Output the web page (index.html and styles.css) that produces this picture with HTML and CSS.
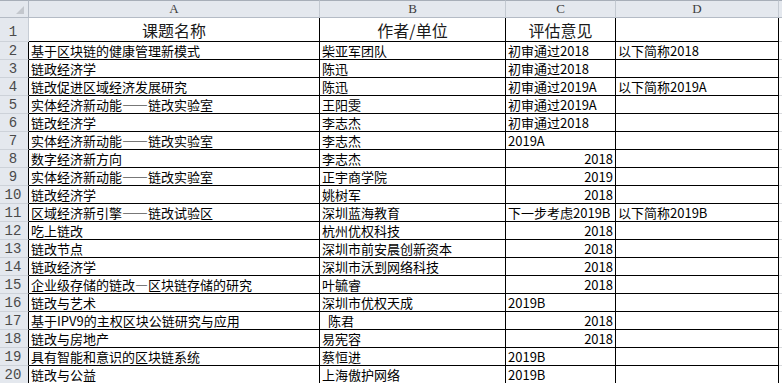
FILE: index.html
```html
<!DOCTYPE html>
<html lang="zh-CN">
<head>
<meta charset="utf-8">
<title>课题评估</title>
<link rel="stylesheet" href="styles.css">
</head>
<body>
<div class="sheet">
  <div class="corner"><span class="tri"></span></div>
  <div class="colh">A</div>
  <div class="colh">B</div>
  <div class="colh">C</div>
  <div class="colh">D</div>
  <div class="colh rest"></div>

  <div class="rn rn1">1</div>
  <div class="c title">课题名称</div>
  <div class="c title">作者/单位</div>
  <div class="c title">评估意见</div>
  <div class="c"></div>
  <div class="g"></div>

  <div class="rn">2</div><div class="c">基于区块链的健康管理新模式</div><div class="c">柴亚军团队</div><div class="c">初审通过2018</div><div class="c">以下简称2018</div><div class="g"></div>
  <div class="rn">3</div><div class="c">链政经济学</div><div class="c">陈迅</div><div class="c">初审通过2018</div><div class="c"></div><div class="g"></div>
  <div class="rn">4</div><div class="c">链改促进区域经济发展研究</div><div class="c">陈迅</div><div class="c">初审通过2019A</div><div class="c">以下简称2019A</div><div class="g"></div>
  <div class="rn">5</div><div class="c">实体经济新动能——链改实验室</div><div class="c">王阳雯</div><div class="c">初审通过2019A</div><div class="c"></div><div class="g"></div>
  <div class="rn">6</div><div class="c">链改经济学</div><div class="c">李志杰</div><div class="c">初审通过2018</div><div class="c"></div><div class="g"></div>
  <div class="rn">7</div><div class="c">实体经济新动能——链改实验室</div><div class="c">李志杰</div><div class="c">2019A</div><div class="c"></div><div class="g"></div>
  <div class="rn">8</div><div class="c">数字经济新方向</div><div class="c">李志杰</div><div class="c num">2018</div><div class="c"></div><div class="g"></div>
  <div class="rn">9</div><div class="c">实体经济新动能——链改实验室</div><div class="c">正宇商学院</div><div class="c num">2019</div><div class="c"></div><div class="g"></div>
  <div class="rn">10</div><div class="c">链改经济学</div><div class="c">姚树军</div><div class="c num">2018</div><div class="c"></div><div class="g"></div>
  <div class="rn">11</div><div class="c">区域经济新引擎——链改试验区</div><div class="c">深圳蓝海教育</div><div class="c">下一步考虑2019B</div><div class="c">以下简称2019B</div><div class="g"></div>
  <div class="rn">12</div><div class="c">吃上链改</div><div class="c">杭州优权科技</div><div class="c num">2018</div><div class="c"></div><div class="g"></div>
  <div class="rn">13</div><div class="c">链改节点</div><div class="c">深圳市前安晨创新资本</div><div class="c num">2018</div><div class="c"></div><div class="g"></div>
  <div class="rn">14</div><div class="c">链政经济学</div><div class="c">深圳市沃到网络科技</div><div class="c num">2018</div><div class="c"></div><div class="g"></div>
  <div class="rn">15</div><div class="c">企业级存储的链改—区块链存储的研究</div><div class="c">叶毓睿</div><div class="c num">2018</div><div class="c"></div><div class="g"></div>
  <div class="rn">16</div><div class="c">链改与艺术</div><div class="c">深圳市优权天成</div><div class="c">2019B</div><div class="c"></div><div class="g"></div>
  <div class="rn">17</div><div class="c">基于IPV9的主权区块公链研究与应用</div><div class="c indent">陈君</div><div class="c num">2018</div><div class="c"></div><div class="g"></div>
  <div class="rn">18</div><div class="c">链改与房地产</div><div class="c">易宪容</div><div class="c num">2018</div><div class="c"></div><div class="g"></div>
  <div class="rn">19</div><div class="c">具有智能和意识的区块链系统</div><div class="c">蔡恒进</div><div class="c">2019B</div><div class="c"></div><div class="g"></div>
  <div class="rn">20</div><div class="c">链改与公益</div><div class="c">上海傲护网络</div><div class="c">2019B</div><div class="c"></div><div class="g"></div>
</div>
</body>
</html>
```

FILE: styles.css
```css
* { box-sizing: border-box; }
html, body { margin: 0; padding: 0; background: #fff; }
body { width: 782px; height: 383px; overflow: hidden; }

.sheet {
  display: grid;
  grid-template-columns: 29px 291px 186px 110px 163px 1fr;
  grid-template-rows: 18px 24px repeat(19, 18px);
  width: 782px;
  font-family: "Noto Sans CJK SC", "Noto Sans", sans-serif;
  font-size: 13px;
  color: #000;
}

.corner, .colh {
  background: #e4e8ee;
  border-top: 1px solid #a7aeb8;
  border-bottom: 1px solid #b4bbc5;
  border-right: 1px solid #c3c9d1;
}
.corner { position: relative; border-right-color: #b4bbc5; }
.tri {
  position: absolute;
  right: 4px;
  bottom: 3px;
  width: 0;
  height: 0;
  border-left: 8px solid transparent;
  border-bottom: 8px solid #c3c7cd;
}
.colh {
  font-family: "Liberation Serif", serif;
  font-size: 13px;
  color: #3c3c3c;
  text-align: center;
  line-height: 16px;
}
.colh.rest { border-right: none; }

.rn {
  background: #e4e8ee;
  border-bottom: 1px solid #cdd2d9;
  border-right: 1px solid #000;
  font-family: "Liberation Mono", monospace;
  font-size: 14px;
  color: #4a4a4a;
  text-align: center;
  padding-right: 2px;
  line-height: 18px;
}
.rn1 { border-right-color: #c6ccd4; line-height: 28px; }

.c {
  border-right: 1px solid #000;
  border-bottom: 1px solid #000;
  padding: 0 2px;
  white-space: nowrap;
  overflow: hidden;
  line-height: 17px;
}
.c.title {
  font-size: 16px;
  text-align: center;
  line-height: 24px;
  color: #1a1a1a;
}
.c.num { text-align: right; }
.c.indent { padding-left: 8px; }

.g { border-bottom: 1px solid #d8dadd; }
```
